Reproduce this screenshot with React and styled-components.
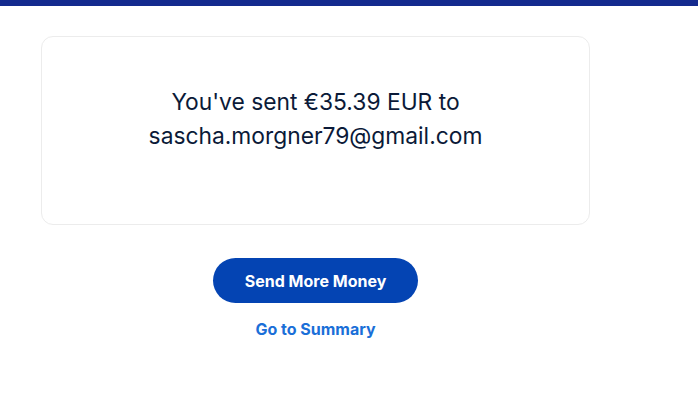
import React from "react";
import styled, { createGlobalStyle } from "styled-components";

const GlobalStyle = createGlobalStyle`
  html, body {
    margin: 0;
    padding: 0;
    background: #fff;
    font-family: Inter, "Liberation Sans", Arial, sans-serif;
  }
`;

const TopBar = styled.div`
  height: 6px;
  background: #142a8e;
`;

const Content = styled.div`
  width: 549px;
  margin: 30px 0 0 41px;
  display: flex;
  flex-direction: column;
  align-items: center;
`;

const Card = styled.div`
  box-sizing: border-box;
  width: 100%;
  height: 189px;
  border: 1px solid #ececec;
  border-radius: 12px;
  padding: 48px 20px 0;
  text-align: center;
`;

const Message = styled.p`
  margin: 0;
  font-size: 22.8px;
  line-height: 34px;
  color: #0b1a38;
  font-weight: 400;
`;

const PrimaryButton = styled.button`
  margin-top: 33px;
  width: 205px;
  height: 45px;
  border: none;
  border-radius: 23px;
  background: #0444b3;
  color: #fff;
  font-family: inherit;
  font-size: 16px;
  font-weight: 700;
  cursor: pointer;
`;

const LinkButton = styled.a`
  margin-top: 16px;
  color: #1a6fd8;
  font-size: 16px;
  font-weight: 700;
  text-decoration: none;
  cursor: pointer;
`;

export default function App() {
  return (
    <>
      <GlobalStyle />
      <TopBar />
      <Content>
        <Card>
          <Message>You've sent €35.39 EUR to</Message>
          <Message>sascha.morgner79@gmail.com</Message>
        </Card>
        <PrimaryButton>Send More Money</PrimaryButton>
        <LinkButton>Go to Summary</LinkButton>
      </Content>
    </>
  );
}
